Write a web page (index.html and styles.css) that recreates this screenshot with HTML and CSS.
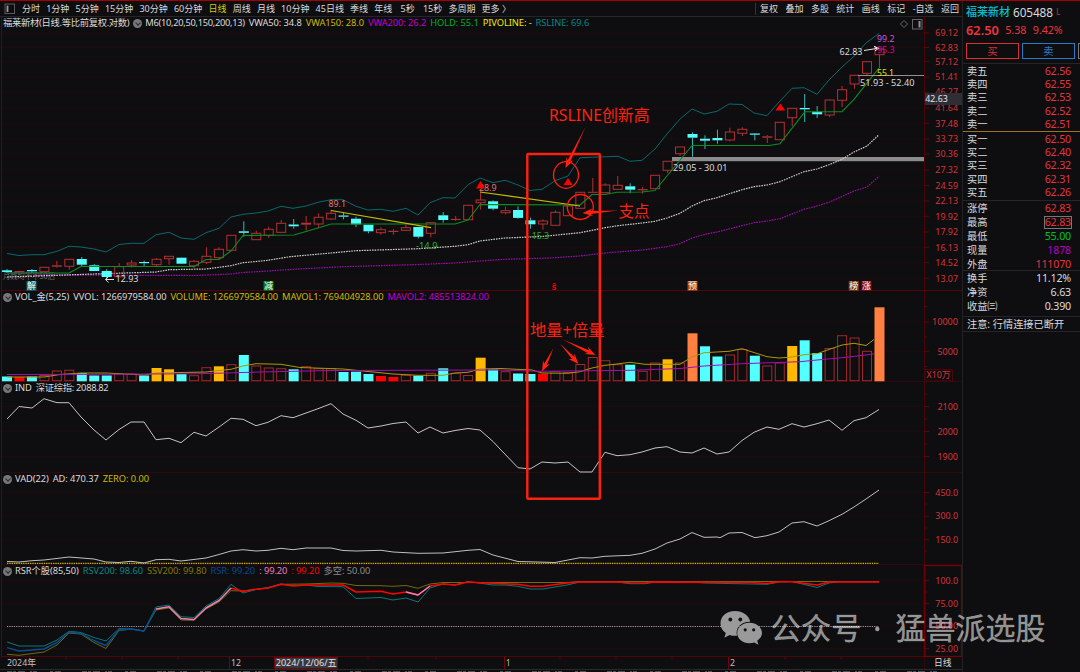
FILE: index.html
```html
<!DOCTYPE html>
<html lang="zh-CN">
<head>
<meta charset="utf-8">
<title>福莱新材 605488</title>
<link rel="stylesheet" href="styles.css">
</head>
<body>
<div class="app">
  <main class="main">
    <nav class="toolbar">
      <svg class="layout-icon" width="12" height="12" viewBox="0 0 12 12"><rect x="1" y="1" width="9.5" height="9.5" fill="none" stroke="#5a5a5e" stroke-width="1"/><rect x="2.6" y="2.6" width="1.8" height="6.4" fill="#9a9a9e"/></svg>
      <div class="periods">
        <span>分时</span><span>1分钟</span><span>5分钟</span><span>15分钟</span><span>30分钟</span><span>60分钟</span><span class="active">日线</span><span>周线</span><span>月线</span><span>10分钟</span><span>45日线</span><span>季线</span><span>年线</span><span class="pad">5秒</span><span class="pad">15秒</span><span>多周期</span><span>更多 〉</span>
      </div>
      <div class="actions"><span>复权</span><span>叠加</span><span>多股</span><span>统计</span><span>画线</span><span>标记</span><span>-自选</span><span>返回</span></div>
    </nav>
    <section class="panel price">
      <svg id="price" viewBox="0 17 962 274"></svg>
      <div class="legend"><span class="tight">福莱新材(日线.等比前复权.对数)</span><i class="drop"></i><span class="tight">M6(10,20,50,150,200,13)</span><span>VWA50: 34.8</span><span class="yellow">VWA150: 28.0</span><span class="purple">VWA200: 26.2</span><span class="green">HOLD: 55.1</span><span class="bright">PIVOLINE: -</span><span class="teal">RSLINE: 69.6</span></div>
    </section>
    <section class="panel volume">
      <svg id="volume" viewBox="0 291 962 91"></svg>
      <div class="legend"><i class="drop"></i><span>VOL_金(5,25)</span><span>VVOL: 1266979584.00</span><span class="yellow">VOLUME: 1266979584.00</span><span class="yellow">MAVOL1: 769404928.00</span><span class="purple">MAVOL2: 485513824.00</span></div>
    </section>
    <section class="panel index">
      <svg id="index" viewBox="0 382 962 91"></svg>
      <div class="legend"><i class="drop"></i><span>IND</span><span class="tight">深证综指: 2088.82</span></div>
    </section>
    <section class="panel vad">
      <svg id="vad" viewBox="0 473 962 92"></svg>
      <div class="legend"><i class="drop"></i><span>VAD(22)</span><span>AD: 470.37</span><span class="yellow">ZERO: 0.00</span></div>
    </section>
    <section class="panel rsr">
      <svg id="rsr" viewBox="0 565 962 92"></svg>
      <div class="legend"><i class="drop"></i><span>RSR个股(85,50)</span><span class="teal">RSV200: 98.60</span><span class="olive">SSV200: 99.80</span><span class="blue">RSR: 99.20</span><span class="pink">: 99.20</span><span class="red">: 99.20</span><span class="gray">多空: 50.00</span></div>
    </section>
    <footer class="timeline"><svg id="timeline" viewBox="0 657 962 15"></svg></footer>
  </main>
  <aside class="side">
    <div class="title"><b>福莱新材</b><span class="code">605488</span><i>L</i></div>
    <div class="quote"><b>62.50</b><span>5.38</span><span>9.42%</span></div>
    <div class="buttons"><span class="buy">买</span><span class="sell">卖</span><span class="more"></span></div>
    <dl class="asks">
      <div><dt>卖五</dt><dd>62.56</dd></div><div><dt>卖四</dt><dd>62.55</dd></div><div><dt>卖三</dt><dd>62.53</dd></div><div><dt>卖二</dt><dd>62.52</dd></div><div><dt>卖一</dt><dd>62.51</dd></div>
    </dl>
    <dl class="bids">
      <div><dt>买一</dt><dd>62.50</dd></div><div><dt>买二</dt><dd>62.40</dd></div><div><dt>买三</dt><dd>62.32</dd></div><div><dt>买四</dt><dd>62.31</dd></div><div><dt>买五</dt><dd>62.26</dd></div>
    </dl>
    <dl class="stats">
      <div><dt>涨停</dt><dd>62.83</dd></div><div><dt>最高</dt><dd class="boxed">62.83</dd></div><div><dt>最低</dt><dd class="low">55.00</dd></div><div><dt>现量</dt><dd class="vol">1878</dd></div><div><dt>外盘</dt><dd>111070</dd></div>
    </dl>
    <dl class="stats plain">
      <div><dt>换手</dt><dd>11.12%</dd></div><div><dt>净资</dt><dd>6.63</dd></div><div><dt>收益㈢</dt><dd>0.390</dd></div>
    </dl>
    <p class="notice">注意: 行情连接已断开</p>
  </aside>
  <svg class="overlay" id="notes" viewBox="0 0 1080 672"></svg>
</div>
<script src="chart.js"></script>
</body>
</html>
```
FILE: styles.css
```css
* { box-sizing: border-box; }
body {
  margin: 0;
  background: #0e0e10;
  color: #dadada;
  font: 9px/12px "Noto Sans", "Noto Sans CJK SC", sans-serif;
  overflow: hidden;
}
.app {
  position: relative;
  display: flex;
  width: 1080px;
  height: 672px;
  border-top: 1px solid #a40000;
}
.main { width: 962px; display: flex; flex-direction: column; }
.toolbar {
  height: 16px;
  display: flex;
  align-items: center;
  padding: 1px 3px 0 4px;
  border-bottom: 1px solid #252527;
  white-space: nowrap;
}
.layout-icon { flex: none; margin-right: 6px; }
.periods { width: 489px; display: flex; justify-content: space-between; }
.periods .pad { padding-left: 2px; }
.periods .active { color: #d0cc00; }
.actions {
  margin-left: auto;
  width: 204px;
  display: flex;
  justify-content: space-between;
  border-left: 1px solid #333336;
  padding-left: 4px;
}
.panel { display: grid; flex: none; }
.panel > * { grid-area: 1 / 1; }
.panel svg, .timeline svg { display: block; width: 962px; height: 100%; }
.price { height: 274px; }
.volume, .index { height: 91px; }
.vad, .rsr { height: 92px; }
.timeline { height: 15px; }
.legend {
  display: flex;
  align-items: center;
  align-self: start;
  gap: 4px;
  height: 12px;
  padding-left: 3px;
  white-space: nowrap;
  font-size: 9.3px;
  letter-spacing: -0.07px;
}
.legend .tight { letter-spacing: -0.3px; }
.drop {
  position: relative;
  width: 9px;
  height: 9px;
  margin-right: -1px;
  border-radius: 50%;
  background: #77777a;
}
.drop::after {
  content: "";
  position: absolute;
  left: 3px;
  top: 2px;
  width: 3px;
  height: 3px;
  border: solid #2a2a2c;
  border-width: 0 1px 1px 0;
  transform: rotate(45deg);
}
.yellow { color: #ccb800; }
.bright { color: #ecec00; }
.purple { color: #c000cc; }
.green { color: #00b024; }
.teal { color: #088484; }
.olive { color: #807800; }
.blue { color: #084890; }
.pink { color: #f07cc0; }
.red { color: #ff0000; }
.gray { color: #8a8a8a; }

.side {
  width: 118px;
  border-left: 1px solid #222225;
  font-size: 10.4px;
}
.title, .quote { display: flex; align-items: center; padding-left: 3px; white-space: nowrap; }
.title { height: 22px; font-size: 11px; }
.title b { color: #00c0d0; font-weight: 500; }
.title .code { margin-left: 3px; font-size: 11.8px; letter-spacing: -0.1px; }
.title i { margin: -2px 0 0 3px; color: #c83030; font: 8px "Noto Sans", sans-serif; }
.quote { height: 14px; gap: 6.5px; color: #ec343c; font-size: 10.6px; }
.quote b { font-size: 12.8px; font-weight: 600; }
.buttons { display: flex; gap: 3px; height: 27px; padding: 6px 0 4px 3px; border-bottom: 1px solid #252528; overflow: hidden; }
.buttons span { flex: none; width: 53px; border: 1px solid; text-align: center; line-height: 15px; }
.buy { color: #d83030; }
.sell { color: #2878c8; }
.buttons .more { color: #777; }
dl { margin: 0; padding: 0 9px 0 4px; }
dl div { display: flex; justify-content: space-between; align-items: center; height: 13.35px; white-space: nowrap; }
dt { font-size: 10.2px; }
dd { margin: 0; color: #e4343c; font-size: 10.7px; letter-spacing: -0.2px; }
.asks { height: 68px; border-bottom: 1px solid #a07020; }
.bids { height: 68px; }
.stats { height: 70px; border-top: 1px solid #252528; }
.stats div { height: 14px; }
.plain { height: 47px; border-bottom: 1px solid #252528; }
.plain dd { color: #dadada; }
.stats .boxed { border: 1px solid #777; line-height: 11px; margin-right: -1px; }
.stats .low { color: #00c024; }
.stats .vol { color: #b400c4; }
.notice { margin: 0; height: 15px; padding-left: 4px; line-height: 14px; font-size: 10.2px; white-space: nowrap; border-bottom: 1px solid #252528; }
.overlay { position: absolute; left: 0; top: -1px; width: 1080px; height: 672px; pointer-events: none; }
svg text { font-family: "Noto Sans", "Noto Sans CJK SC", sans-serif; }
```
FILE: chart.js
```js
const NS = 'http://www.w3.org/2000/svg';
const STEP = 12.464;
const xAt = i => 7 + i * STEP;
const $ = id => document.getElementById(id);

function el(parent, name, attrs) {
  const n = document.createElementNS(NS, name);
  for (const k in attrs) n.setAttribute(k, attrs[k]);
  $(parent).appendChild(n);
  return n;
}
function line(p, x1, y1, x2, y2, stroke, extra = {}) {
  return el(p, 'line', { x1, y1, x2, y2, stroke, ...extra });
}
function path(p, points, stroke, extra = {}) {
  return el(p, 'polyline', { points, fill: 'none', stroke, 'stroke-width': 1, 'stroke-linejoin': 'round', ...extra });
}
/* Text centred vertically on y and fitted to width w. */
function label(p, x, y, w, str, fill, size = 9.6, extra = {}) {
  const t = el(p, 'text', { x, y: y + size * 0.36, fill, 'font-size': size, textLength: w, lengthAdjust: 'spacingAndGlyphs', ...extra });
  t.textContent = str;
  return t;
}
function gridLine(p, y) {
  line(p, 2, y, 923, y, '#3a060a', { 'stroke-dasharray': '1.5 2.5', 'stroke-width': 0.8 });
  line(p, 924, y, 929, y, '#5c0408');
}
function frame(p, top, bottom) {
  line(p, 924.5, top, 924.5, bottom, '#4a0408');
  line(p, 2, bottom - 0.5, 962, bottom - 0.5, '#540408');
  line(p, 1.5, top, 1.5, bottom, '#202023');
}
const RED = '#b43032', CYAN = '#54ffff', AXIS = '#d83238';

/* Price panel */
frame('price', 17, 291);
[['69.12', 33], ['62.83', 47.5], ['57.12', 61.5], ['51.41', 77], ['46.27', 92], ['41.64', 108], ['37.48', 123.3], ['33.73', 139], ['30.36', 154], ['27.32', 170], ['24.59', 185.3], ['22.13', 201], ['19.92', 216.3], ['17.92', 232], ['16.13', 247.3], ['14.52', 262.7], ['13.07', 278.3]].forEach(([s, y]) => {
  gridLine('price', y);
  label('price', 935.3, y, 22.7, s, AXIS);
});
el('price', 'rect', { x: 925, y: 93, width: 37, height: 12, fill: '#2f2e37' });
label('price', 925.3, 99, 22.5, '42.63', '#e4e4e4');
label('price', 3, 276, 52, '月线均不不50后', '#6a6a6a', 8);

path('price', '7,253.5 19,255.5 32,254.7 44,254.7 57,251.3 69,246.3 81,247 94,249 106,252 119,244.5 131,243.3 144,243.3 156,234.7 169,232.3 181,238 194,239.3 206,232.7 219,228.3 231,217 243,214.3 256,213 268,211 281,206.3 293,208.3 306,206 318,202.3 331,199.7 343,199.7 356,206.3 368,210 381,209.3 393,211.3 406,208.3 418,215 430,202.7 443,197.7 455,198 468,184.7 480,178 493,182.7 505,180.3 518,185 530,190.5 542,189.3 555,180.7 568,176 580,157.7 618,156.3 630,161.3 642,160.3 655,149 667,134 680,119 692,109 704,114 717,111.3 729,104 742,104.5 754,113 767,115.7 779,102 792,88.3 804,87.7 817,94.3 829,80 842,67 854,56.3 866,43 879,33.3', '#07696c');
const dots = { 'stroke-dasharray': '1.6 1', 'stroke-width': 1.2 };
path('price', '7,272.5 57,275 194,275.5 231,274 243,272.5 268,271 293,269.3 318,268 343,266.7 418,264.5 455,263 480,261 505,259.3 550,258 580,256 605,253 642,250 667,246.7 680,243.7 692,238 705,234.3 717,232 742,225.7 754,222.7 767,221 780,218.7 804,209.3 817,206 829,202.3 854,191 867,187 879,176.3', '#9a0cac', dots);
el('price', 'rect', { x: 672, y: 157, width: 252, height: 4.2, fill: '#8c8c8c' });
path('price', '7,277 94,274 156,272 169,269.7 206,269 231,265.7 243,262.7 268,260.3 290,256.7 331,253 356,250.7 418,248.7 455,246.3 468,244.7 480,241 505,238 542,236.5 567,234 580,232.7 605,227.7 618,225.7 642,223 655,221.3 667,218 680,213.3 692,206 704,200.7 717,197.7 742,189.7 754,186.7 767,185 780,181.7 804,171.7 817,169 829,164.7 842,159.3 854,152 867,146 879,134.7', '#d0d0d0', dots);

/* kind, body top, body bottom, high, low; u = hollow, d = filled, r = red doji */
const candles = [
  ['d',270.3,272,269,273],['r',271,272.3,270.7,272.7],['d',270,271.3,269,273],['u',267.3,271.7,267,272],['r',265.3,266.7,261,267.7],['u',259.3,266.3,259,269.7],
  ['d',259,264.7,257,266],['d',265.3,271,264,271],['d',271,277,269,280],['u',266.7,276.7,263,277],['u',263,265,260,267.5],['d',262,263.2,260.5,266],
  ['u',259.3,264.7,258,266.5],['u',256.3,258.7,256,264.7],['d',257.7,263.7,257.5,264],['u',261.3,265.7,260,268],['u',256.3,262.3,247.3,264],['u',249.3,257.7,247.3,259.5],
  ['u',235.3,250.3,235,250.5],['d',231.3,232.8,221.3,236.7],['u',233.3,239.7,230.7,240],['u',229.3,235.3,226.7,238],['u',223.3,232.3,220,232.5],['d',224.5,226.3,219,228.7],
  ['r',222.7,224.7,216,230.7],['u',217.3,224,213.3,228],['u',213.3,219,210,220],['d',215.5,216.7,212.3,219.3],['d',218.7,224.3,216.7,227],['d',224.7,231.3,224.5,233.3],
  ['u',229.7,232.7,227.3,234.7],['r',230.8,232,229,234.7],['u',227.7,230.3,224.7,231],['d',227,236.7,226.7,238.3],['u',222.7,233.3,222,237.3],['d',215.3,220,212,222.7],
  ['r',218.9,220,216,221],['u',205.3,219.7,205,220],['u',200,202.7,191.7,209.7],['d',201.3,208.7,200.3,210.3],['u',210.7,212.7,206.7,214.3],['d',210,217.9,206.3,218.7],
  ['d',220.3,224.3,217.7,228.7],['u',221,224,219.3,229.7],['u',212.3,225.3,210.3,225.5],['u',206,215.7,204,216],['u',192.3,208.3,192,208.5],['r',191.8,192.8,178,193],
  ['u',185,192.7,183.3,193],['u',185.3,189.3,176,189.5],['d',186.3,189.7,183.3,193.3],['r',189.1,190.3,186.7,193.7],['u',175.3,188.7,175,189],['u',161.3,170.3,161,173],
  ['u',147,153.7,147,156],['d',134,137.7,132.3,156.7],['d',138.7,140.7,135.3,149],['d',138,140.3,129.7,143.7],['u',132,140,127.7,141.3],['u',129.3,133.3,127.3,136],
  ['d',133.5,134.7,133,140.3],['r',136.3,137.7,135,143],['u',122.3,139.7,122,140],['u',108.3,117.7,108,126],['d',108,109.3,94,122],['d',111.7,114.3,106,118],
  ['u',100,115,99.7,117.3],['u',89.7,100.3,86,107],['u',75.3,84,75,88.7],['u',61.7,73.3,61.3,75],['u',49,54.7,48,68]
];
candles.forEach(([k, t, b, h, l], i) => {
  const x = xAt(i), c = k === 'd' ? '#38b8b8' : RED;
  line('price', x, h, x, t, c);
  line('price', x, b, x, l, c);
  el('price', 'rect', k === 'u'
    ? { x: x - 4.5, y: t, width: 9, height: b - t, fill: 'none', stroke: RED }
    : { x: x - 5, y: t, width: 10, height: b - t, fill: k === 'd' ? CYAN : '#b83032' });
});
path('price', '7,273 69,273 81,266.5 194,266.5 206,259.5 219,259.5 231,251 243,235.5 294,235 306,231.5 318,228 331,224 455,224 468,220 480,204.5 580,205 592,194.5 605,194.5 617,192.3 642,192 655,190.5 692,145.5 769,145.5 780,143.7 805,111.7 842,111.7 854,99.3 866.7,83.3 879,68', '#0c8c22', { 'stroke-width': 1.1 });
path('price', '331,210.5 431,227.7', '#c4bc00', { 'stroke-width': 1.2 });
path('price', '480,192 580,206', '#c4bc00', { 'stroke-width': 1.2 });
line('price', 858, 75.5, 924, 75.5, '#a0a0a0', { 'stroke-width': 0.9 });

label('price', 115.5, 279, 23, '12.93', '#dadada');
path('price', '114,279.5 105.5,279.5 108.5,276.5 105.5,279.5 108.5,282.5', '#dadada');
label('price', 328.5, 204, 17.5, '89.1', '#e47878');
label('price', 479, 187.3, 17.5, '28.9', '#e47878');
label('price', 416, 245.3, 21.5, '-14.9', '#2cac34');
label('price', 529, 235.8, 20, '-15.3', '#2cac34');
label('price', 839.5, 51.3, 23, '62.83', '#dadada');
path('price', '864,50.5 878.5,48.2 874,46.5 878.5,48.2 875,51', '#e8e8e8');
label('price', 877, 38.3, 17.5, '99.2', '#d058d8');
label('price', 877, 49.7, 17.5, '95.3', '#e00084');
label('price', 877, 72.3, 17, '55.1', '#e4e400');
label('price', 860, 82.5, 54.5, '51.93 - 52.40', '#dadada');
label('price', 673, 168, 54.5, '29.05 - 30.01', '#dadada');
['476,188.5 480.5,181 485,188.5', '563.5,185 568,178 572.5,185', '775.5,110.5 780.3,103.5 785.2,110.5'].forEach(points => el('price', 'polygon', { points, fill: '#ff0000' }));
[['解', 31.5, '#087070'], ['减', 268.5, '#0a7818'], ['预', 692.5, '#b04410'], ['榜', 853.7, '#804008'], ['涨', 866.5, '#8a0808']].forEach(([s, x, c]) => {
  el('price', 'rect', { x: x - 5, y: 281, width: 10, height: 9.7, fill: c });
  label('price', x - 4.5, 286, 9, s, '#ffffff', 9);
});
label('price', 551.7, 286.6, 4.6, 'ŝ', '#f00000', 9, { 'font-weight': 700 });
el('price', 'path', { d: 'M904 20.5L907.5 24L904 27.5L900.5 24Z', fill: 'none', stroke: '#66666a' });
el('price', 'rect', { x: 912.5, y: 19.5, width: 9.5, height: 9.5, fill: 'none', stroke: '#66666a' });
el('price', 'rect', { x: 918.5, y: 21, width: 2, height: 6.5, fill: '#909094' });

/* Volume panel */
frame('volume', 291, 382.5);
[['10000', 322, 932, 26], ['5000', 351.7, 937.5, 20.5]].forEach(([s, y, x, w]) => { gridLine('volume', y); label('volume', x, y, w, s, AXIS); });
[306.5, 337, 366.5].forEach(y => line('volume', 924, y, 927, y, '#5c0408'));
const vol = 'c376.5 r377 c376.5 h375.5 h371 h370.3 c373 c375.5 c375.5 h374 h374 c375.5 y368 y369.3 c374 h375.7 h367.7 y366.3 h364.7 c355 h366 h368 h368.7 c369.3 h366.7 h368.7 h368.7 c372 c371.7 c374 r376 r377 h375.3 c375.7 h373.3 c368.3 h373.3 h375.5 y357.7 c369.5 h371.7 c373.5 c374 r373.7 h371.7 h372.5 h364.5 h357.5 h360.7 h364.7 c364.7 h371.3 h363 y359.3 h363 o333.3 c346.3 c356.5 h355 h349.5 c355.7 h366 h363 y346 c340.3 c353 h348.5 h335.7 h338 h351.3 o307.3'.split(' ');
const fills = { c: CYAN, r: '#ff0000', y: '#ffb900', o: '#ff8040' };
const bars = hollow => vol.forEach((v, i) => {
  const k = v[0], y = +v.slice(1), x = xAt(i);
  if ((k === 'h') !== hollow) return;
  el('volume', 'rect', hollow
    ? { x: x - 4.5, y, width: 9, height: 380.7 - y, fill: 'none', stroke: '#a02a2c' }
    : { x: x - 5, y, width: 10, height: 381.3 - y, fill: fills[k] });
});
bars(true);
bars(false);
path('volume', '7,377 44,377 60,374.5 81,373 106,373 144,375 156,373 181,372.5 206,372 219,370.5 231,369.3 243,366 256,363.7 281,364.3 300,367.5 343,369 368,371.5 393,374 418,375.3 443,375.3 455,373 468,372.3 480,369 500,368.5 532,370 542,373 568,373.3 580,371.7 592,368 605,365.3 617,364 630,362.3 645,364.3 680,364.3 692,357 704,352.7 729,351.3 742,348.7 767,356.7 779,358 792,357 804,354.7 817,353.7 829,349.5 842,345 854,343.3 866,345.5 874,339.5', '#aa9808');
path('volume', '7,374.5 100,374.3 200,373.7 260,372 330,370.5 500,370 540,371.3 630,370.3 680,368.5 704,366 742,363.7 800,361.7 817,360 842,357.7 866,355 874,353.7', '#a40cb4');
el('volume', 'rect', { x: 925, y: 369.5, width: 27.5, height: 11.5, fill: 'none', stroke: '#500408' });
label('volume', 926.5, 375, 24, 'X10万', AXIS, 9.2);

/* Index panel */
frame('index', 382, 473.5);
[['2100', 406.5], ['2000', 431.5], ['1900', 456.5]].forEach(([s, y]) => { gridLine('index', y); label('index', 937.5, y - 0.2, 20.5, s, AXIS); });
[394, 419, 444].forEach(y => line('index', 924, y, 927, y, '#5c0408'));
path('index', '7,419 19,406.5 32,408 44,398.7 57,402.7 69,402.7 81,417 94,430 106,440 119,429.5 131,422 144,422 156,439.7 169,438.3 181,442.7 194,432.3 206,436 219,427 231,418.3 243,419.3 256,425.7 268,422.3 281,415.7 293,417.7 306,413 318,408.7 331,403.7 343,414 356,420.3 368,428 381,426 393,423.5 406,422 418,433 430,427 443,433 455,430.5 468,428.5 480,430 493,441.5 500,449 518,467.7 530,469 542,462 555,463 568,462 580,472 592,472 605,452.3 617,455.7 630,454.7 642,452 655,448 667,446.7 680,452 692,453 704,448 717,454 729,452 742,440.5 754,432.3 767,427 779,429.3 792,423.7 804,427 817,423.7 829,420 842,430.3 854,420.7 866,417.7 879,409.5', '#c4c4c4');

/* VAD panel */
frame('vad', 473, 565.5);
[['450.0', 492.5], ['300.0', 516.2], ['150.0', 539.7]].forEach(([s, y]) => { gridLine('vad', y); label('vad', 935.3, y - 0.2, 22.7, s, AXIS); });
[504, 528, 551].forEach(y => line('vad', 924, y, 927, y, '#5c0408'));
line('vad', 7, 563.4, 879, 563.4, '#c4b40c', { 'stroke-dasharray': '1.4 0.9', 'stroke-width': 1.1 });
path('vad', '7,561.5 19,562 32,560.7 44,560 69,557 94,559 106,562 119,562.5 131,561.3 144,563 156,559.7 169,559.3 181,561 206,558 219,554.5 231,551 243,549.7 256,551 268,550.3 281,548.3 293,549.7 306,548 331,548 343,550.5 356,551 381,550.3 393,552 418,553.3 443,553 468,550.3 480,549.5 493,555 518,561.5 555,562.5 568,560 580,557.7 592,558 605,556.3 630,555.3 642,553.3 655,549 667,543 680,539 692,532.5 704,537.3 717,537 720,537.7 729,533 742,532.5 755,537.7 767,535.7 779,532 792,523 804,521.7 817,526 829,520.7 842,514.3 854,507 866,499 879,490', '#c0c0c0');

/* RSR panel */
frame('rsr', 565, 657);
[['100.0', 580.5], ['75.00', 603.5], ['50.00', 626], ['25.00', 648.5]].forEach(([s, y]) => { gridLine('rsr', y); label('rsr', 935.3, y - 0.2, 22.7, s, AXIS); });
[592, 615, 637].forEach(y => line('rsr', 924, y, 927, y, '#5c0408'));
el('rsr', 'rect', { x: 924.5, y: 565.5, width: 37, height: 91, fill: 'none', stroke: '#780004', 'stroke-width': 1.3 });
line('rsr', 7, 626.5, 879, 626.5, '#a0a0a0', { 'stroke-dasharray': '1.2 1.1' });
path('rsr', '7,654.3 19,655.3 44,652 57,645 69,633 81,634 94,642.5 106,648.5 119,630.5 131,629 144,631 156,610 169,608 181,620 194,620.3 206,609 219,602 231,590.7 243,591 268,588 281,584.3 306,584 331,583 343,583.3 356,585.5 381,585.7 393,586.3 406,585.5 418,588.3 430,584 443,582.5 567,582.5 580,581.5 879,581.5', '#706a08');
path('rsr', '7,642 19,646 44,646 57,640 69,631.3 81,632.5 94,637.5 106,641 119,628.7 131,629 144,631 156,607 169,605 181,616.7 194,617.5 206,606 219,598.5 231,584.3 243,593 256,589.5 268,587.5 281,584 293,585.5 306,585 318,586.5 343,586.7 356,598.5 381,597.5 393,600 406,598 418,602 430,588 443,584 455,585 468,581.5 493,585 505,585 518,586.3 530,589 543,589 567,585 580,582 617,582 630,583.7 645,583.7 655,582 690,582 704,583 767,584.3 779,582 792,581.5 817,587.5 829,583 842,581.5 879,581.7', '#087878');
path('rsr', '7,647.7 19,651 44,649 57,642.5 69,632 81,633.5 94,640.5 106,645.5 119,630 131,629 144,631 156,609', '#084c94', { 'stroke-width': 1.4 });
path('rsr', '231,588 243,591.3 256,589.3 268,588 281,584.3 293,586 306,585 343,585 356,592 381,591.3 393,594 406,592 418,595 430,586 443,584 455,585 468,582 480,582.7 493,583.3 518,584.3 530,586.3 543,586.3 567,583 580,582 617,582 630,582.7 645,583 655,582 750,582.5 767,583.5 779,581.7 792,581.7 817,585 829,582 879,582', '#ff0000', { 'stroke-width': 1.5 });
path('rsr', '156,609 169,606.7 181,618.5 194,619.5 206,608 219,600.5 231,588', '#f080b8', { 'stroke-width': 1.5 });
path('rsr', '406,592 418,595 430,586', '#f080b8', { 'stroke-width': 1.5 });

/* Time axis */
line('timeline', 924.5, 657, 924.5, 669, '#30060a');
label('timeline', 7, 663, 29, '2024年', '#c0c0c0');
[[231, '12', 10], [506, '1', 4.5], [730, '2', 5]].forEach(([x, s, w]) => {
  line('timeline', x - 1.5, 657, x - 1.5, 669, '#700408');
  label('timeline', x, 663, w, s, '#c0c0c0');
});
[66, 122, 178, 290, 368, 436, 560, 616, 672, 785, 841].forEach(x => line('timeline', x, 657, x, 659.5, '#500408'));
el('timeline', 'rect', { x: 274.5, y: 657.5, width: 63, height: 11, fill: '#38373f', stroke: '#700408' });
label('timeline', 275.7, 663, 61, '2024/12/06/五', '#e0e0e0');
label('timeline', 934, 663, 17.5, '日线', '#dadada', 9);
line('timeline', 0, 669.5, 962, 669.5, '#2a2a2d');
line('timeline', 7, 671.5, 950, 671.5, '#66666a', { 'stroke-dasharray': '5 1 3 2 7 5 2 1 4 13 3 2 6 21', 'stroke-width': 0.8 });

/* Hand-drawn marks and watermark across panels */
const INK = '#ff2010';
el('notes', 'rect', { x: 527.3, y: 154, width: 72.5, height: 344.7, fill: 'none', stroke: INK, 'stroke-width': 2.4, rx: 0.8 });
el('notes', 'ellipse', { cx: 566, cy: 175, rx: 12.5, ry: 13.3, fill: 'none', stroke: INK, 'stroke-width': 1.3 });
el('notes', 'ellipse', { cx: 580.3, cy: 207, rx: 13, ry: 12.5, fill: 'none', stroke: INK, 'stroke-width': 1.3 });
label('notes', 549, 115.5, 100.5, 'RSLINE创新高', INK, 16);
label('notes', 618.5, 211.5, 31, '支点', INK, 15.6);
label('notes', 530, 330, 74.5, '地量+倍量', INK, 15.8);
/* Tapered arrow: thin tail, swept-back head. */
function arrow(x1, y1, x2, y2) {
  const d = Math.hypot(x2 - x1, y2 - y1), ux = (x2 - x1) / d, uy = (y2 - y1) / d;
  const at = (back, side) => `${x2 - ux * back - uy * side},${y2 - uy * back + ux * side}`;
  el('notes', 'polygon', { points: [`${x1},${y1}`, at(8, 1.5), at(10.5, 4), `${x2},${y2}`, at(10.5, -4), at(8, -1.5)].join(' '), fill: INK });
}
arrow(585.5, 127, 565.5, 168);
arrow(618, 210.5, 582.5, 213);
arrow(553.5, 348, 542, 371.5);
arrow(560, 343.5, 578.5, 364);
arrow(563, 339.5, 595.5, 355);

const mark = '#9a9a9a';
el('notes', 'path', { d: 'M735 611C726.5 611 720.5 616.2 720.5 623.3C720.5 627.5 722.2 630.5 725.8 633L724.4 637.8L729.6 635C732 635.8 734.2 636 737 635.7C735 627.5 741.5 621.5 750.2 621.7C748.8 615.2 742.8 611 735 611Z', fill: mark });
el('notes', 'path', { d: 'M749.5 622.8C742.5 622.8 737.2 627.4 737.2 633C737.2 638.8 742.5 643.3 749.5 643.3C751.3 643.3 752.7 643 754.2 642.5L758.4 644.8L757.2 640.7C760.2 638.7 762 636 762 633C762 627.4 756.4 622.8 749.5 622.8Z', fill: mark });
[[730.3, 619.5, 1.9], [740.3, 619.5, 1.9], [745.2, 629.8, 1.6], [753.7, 629.8, 1.6]].forEach(([cx, cy, r]) => el('notes', 'circle', { cx, cy, r, fill: '#0e0e10' }));
const stamp = { 'fill-opacity': 0.55, stroke: '#ffffff', 'stroke-opacity': 0.3, 'stroke-width': 0.5 };
label('notes', 770.5, 628, 91, '公众号', '#ffffff', 30, stamp);
el('notes', 'circle', { cx: 877.3, cy: 629, r: 2.2, fill: mark });
label('notes', 895.5, 628, 150, '猛兽派选股', '#ffffff', 30, stamp);
```
